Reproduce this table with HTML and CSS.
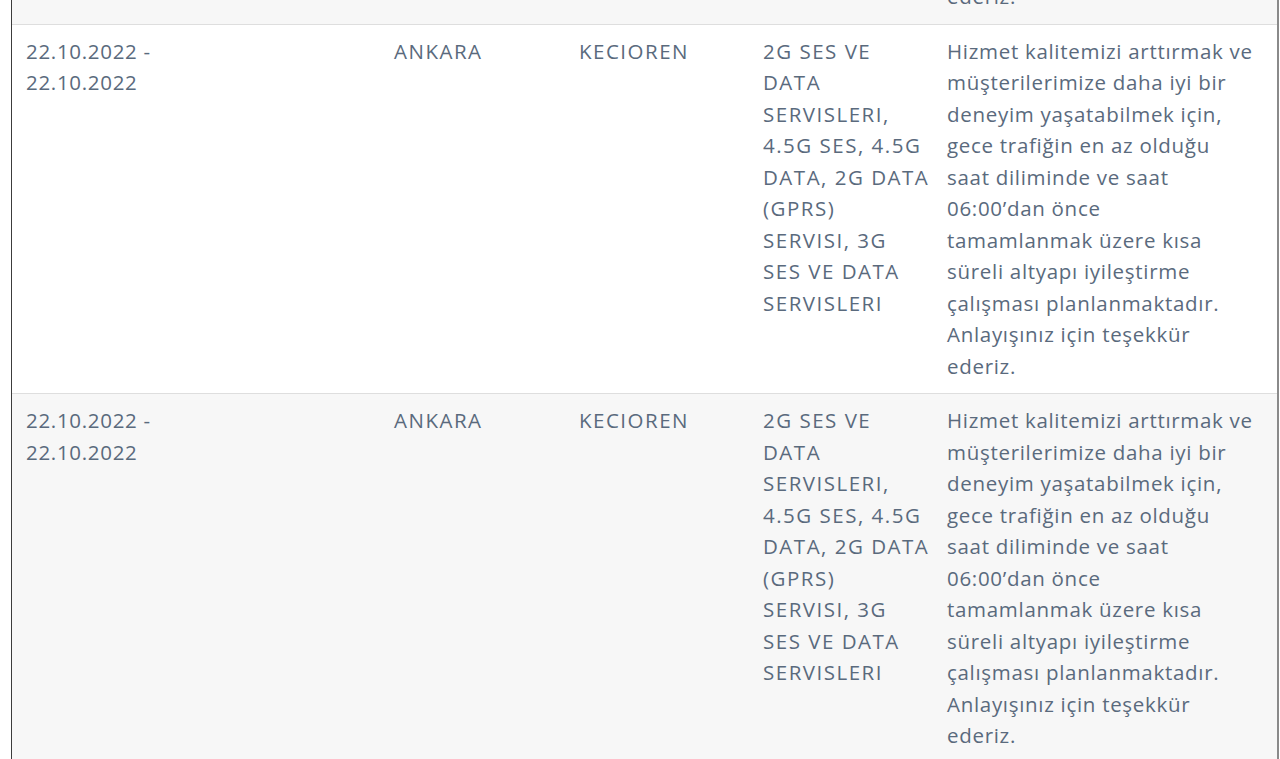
FILE: index.html
```html
<!DOCTYPE html>
<html lang="tr">
<head>
<meta charset="utf-8">
<title>Planlı Çalışmalar</title>
<link rel="stylesheet" href="styles.css">
</head>
<body>
<div class="frame">
  <table class="works">
    <colgroup>
      <col class="c-date"><col class="c-city"><col class="c-district"><col class="c-service"><col class="c-desc">
    </colgroup>
    <tbody>
      <tr>
        <td class="date">22.10.2022 -<br>22.10.2022</td>
        <td class="caps">ANKARA</td>
        <td class="caps">KECIOREN</td>
        <td class="caps svc">2G SES VE<br>DATA<br>SERVISLERI,<br>4.5G SES, 4.5G<br>DATA, 2G DATA<br>(GPRS)<br>SERVISI, 3G<br>SES VE DATA<br>SERVISLERI</td>
        <td class="desc">Hizmet kalitemizi arttırmak ve<br>müşterilerimize daha iyi bir<br>deneyim yaşatabilmek için,<br>gece trafiğin en az olduğu<br>saat diliminde ve saat<br>06:00’dan önce<br>tamamlanmak üzere kısa<br>süreli altyapı iyileştirme<br>çalışması planlanmaktadır.<br>Anlayışınız için teşekkür<br>ederiz.</td>
      </tr>
      <tr>
        <td class="date">22.10.2022 -<br>22.10.2022</td>
        <td class="caps">ANKARA</td>
        <td class="caps">KECIOREN</td>
        <td class="caps svc">2G SES VE<br>DATA<br>SERVISLERI,<br>4.5G SES, 4.5G<br>DATA, 2G DATA<br>(GPRS)<br>SERVISI, 3G<br>SES VE DATA<br>SERVISLERI</td>
        <td class="desc">Hizmet kalitemizi arttırmak ve<br>müşterilerimize daha iyi bir<br>deneyim yaşatabilmek için,<br>gece trafiğin en az olduğu<br>saat diliminde ve saat<br>06:00’dan önce<br>tamamlanmak üzere kısa<br>süreli altyapı iyileştirme<br>çalışması planlanmaktadır.<br>Anlayışınız için teşekkür<br>ederiz.</td>
      </tr>
      <tr>
        <td class="date">22.10.2022 -<br>22.10.2022</td>
        <td class="caps">ANKARA</td>
        <td class="caps">KECIOREN</td>
        <td class="caps svc">2G SES VE<br>DATA<br>SERVISLERI,<br>4.5G SES, 4.5G<br>DATA, 2G DATA<br>(GPRS)<br>SERVISI, 3G<br>SES VE DATA<br>SERVISLERI</td>
        <td class="desc">Hizmet kalitemizi arttırmak ve<br>müşterilerimize daha iyi bir<br>deneyim yaşatabilmek için,<br>gece trafiğin en az olduğu<br>saat diliminde ve saat<br>06:00’dan önce<br>tamamlanmak üzere kısa<br>süreli altyapı iyileştirme<br>çalışması planlanmaktadır.<br>Anlayışınız için teşekkür<br>ederiz.</td>
      </tr>
    </tbody>
  </table>
</div>
</body>
</html>
```
FILE: styles.css
```css
html, body {
  margin: 0;
  padding: 0;
  background: #ffffff;
  overflow: hidden;
}

.frame {
  margin-left: 11px;
  width: 1265px;
  border-left: 1px solid #3c3c3c;
  border-right: 2px solid #8a8a8a;
  margin-top: -345px;
}

.works {
  width: 100%;
  border-collapse: collapse;
  table-layout: fixed;
  font-family: "Open Sans", "Noto Sans", sans-serif;
  font-size: 20.5px;
  line-height: 31.5px;
  letter-spacing: 0.7px;
  color: #5a6a7d;
}

.c-date { width: 368px; }
.c-city { width: 185px; }
.c-district { width: 184px; }
.c-service { width: 184px; }
.c-desc { width: auto; }

.works tr {
  border-bottom: 1px solid #dedede;
}

.works tr:nth-child(odd) {
  background: #f7f7f7;
}

.works tr:nth-child(even) {
  background: #ffffff;
}

.works td {
  vertical-align: top;
  padding: 11px 14px 11px 14px;
  white-space: nowrap;
}

.works td.caps {
  letter-spacing: 1.5px;
}

.works td.svc,
.works td.desc {
  padding-right: 0;
}
```
